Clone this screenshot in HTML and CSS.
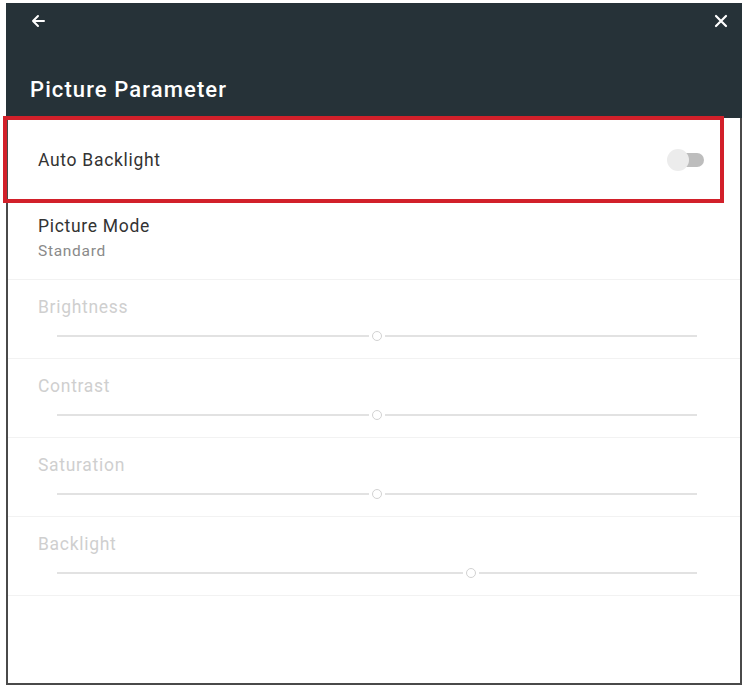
FILE: index.html
```html
<!DOCTYPE html>
<html lang="en">
<head>
<meta charset="utf-8">
<title>Picture Parameter</title>
<link rel="stylesheet" href="styles.css">
</head>
<body>
<div class="panel">
  <header class="appbar">
    <div class="appbar-top">
      <svg class="icon" width="16" height="16" viewBox="0 0 16 16" aria-label="Back">
        <path d="M14 8H3M8 3L3 8l5 5" fill="none" stroke="#fff" stroke-width="2" stroke-linecap="round" stroke-linejoin="round"/>
      </svg>
      <svg class="icon" width="14" height="14" viewBox="0 0 14 14" aria-label="Close">
        <path d="M2 2l10 10M12 2L2 12" fill="none" stroke="#fff" stroke-width="2.2" stroke-linecap="round"/>
      </svg>
    </div>
    <h1 class="title">Picture Parameter</h1>
  </header>

  <div class="list">
    <div class="row row-toggle">
      <span class="label">Auto Backlight</span>
      <span class="switch"><span class="knob"></span></span>
      <div class="highlight"></div>
    </div>

    <div class="row row-mode">
      <span class="label">Picture Mode</span>
      <span class="sub">Standard</span>
    </div>

    <div class="row row-slider">
      <span class="label disabled">Brightness</span>
      <div class="slider"><span class="track"></span><span class="thumb"></span><span class="track"></span></div>
    </div>

    <div class="row row-slider">
      <span class="label disabled">Contrast</span>
      <div class="slider"><span class="track"></span><span class="thumb"></span><span class="track"></span></div>
    </div>

    <div class="row row-slider">
      <span class="label disabled">Saturation</span>
      <div class="slider"><span class="track"></span><span class="thumb"></span><span class="track"></span></div>
    </div>

    <div class="row row-slider">
      <span class="label disabled">Backlight</span>
      <div class="slider"><span class="track" style="flex: 65"></span><span class="thumb"></span><span class="track" style="flex: 35"></span></div>
    </div>
  </div>
</div>
</body>
</html>
```

FILE: styles.css
```css
* { box-sizing: border-box; }

html, body {
  margin: 0;
  background: #fff;
}

body {
  font-family: Roboto, "Liberation Sans", sans-serif;
  padding: 3px 3px 2px 6px;
  height: 687px;
}

.panel {
  height: 100%;
  border: 2px solid #4a4a4a;
  border-top: none;
  display: flex;
  flex-direction: column;
  background: #fff;
}

.appbar {
  background: #263238;
  height: 115px;
  padding: 0 14px 0 24px;
  display: flex;
  flex-direction: column;
  margin: 0 -2px;
}

.appbar-top {
  display: flex;
  justify-content: space-between;
  align-items: center;
  height: 40px;
  padding: 0 0 4px 0;
}

.icon { display: block; }

.title {
  margin: 36px 0 0;
  color: #fff;
  font-size: 22px;
  font-weight: 500;
  letter-spacing: 1.1px;
  line-height: 1;
}

.list {
  display: flex;
  flex-direction: column;
}

.row {
  position: relative;
  border-bottom: 1px solid #f2f2f2;
  padding: 0 42px 0 30px;
}

.label {
  font-size: 17.5px;
  letter-spacing: 0.7px;
  color: #333;
}

.label.disabled { color: #cfcfcf; }

.row-toggle {
  height: 84px;
  display: flex;
  align-items: center;
  justify-content: space-between;
  padding-right: 34px;
  border-bottom: none;
}

.switch {
  position: relative;
  width: 34px;
  height: 14px;
  border-radius: 7px;
  background: #bdbdbd;
  margin-right: 2px;
}

.knob {
  position: absolute;
  left: -3px;
  top: -4px;
  width: 22px;
  height: 22px;
  border-radius: 50%;
  background: #ececec;
}

/* red outline drawn over the first row */
.highlight {
  position: absolute;
  left: -5px;
  top: -2px;
  width: 721px;
  height: 87px;
  border: 4px solid #d2202a;
  pointer-events: none;
}

.row-mode {
  height: 78px;
  display: flex;
  flex-direction: column;
  justify-content: center;
  gap: 6px;
  padding-bottom: 6px;
}

.sub {
  font-size: 15.5px;
  letter-spacing: 0.7px;
  color: #8a8a8a;
}

.row-slider {
  height: 79px;
  display: flex;
  flex-direction: column;
  padding-top: 17px;
}

.slider {
  display: flex;
  align-items: center;
  margin: 14px 0 0 19px;
  width: 640px;
  height: 10px;
}

.track {
  flex: 1;
  height: 2px;
  background: #e2e2e2;
}

.thumb {
  width: 10px;
  height: 10px;
  margin: 0 3px;
  border: 1.5px solid #d2d2d2;
  border-radius: 50%;
  flex: none;
}
```
